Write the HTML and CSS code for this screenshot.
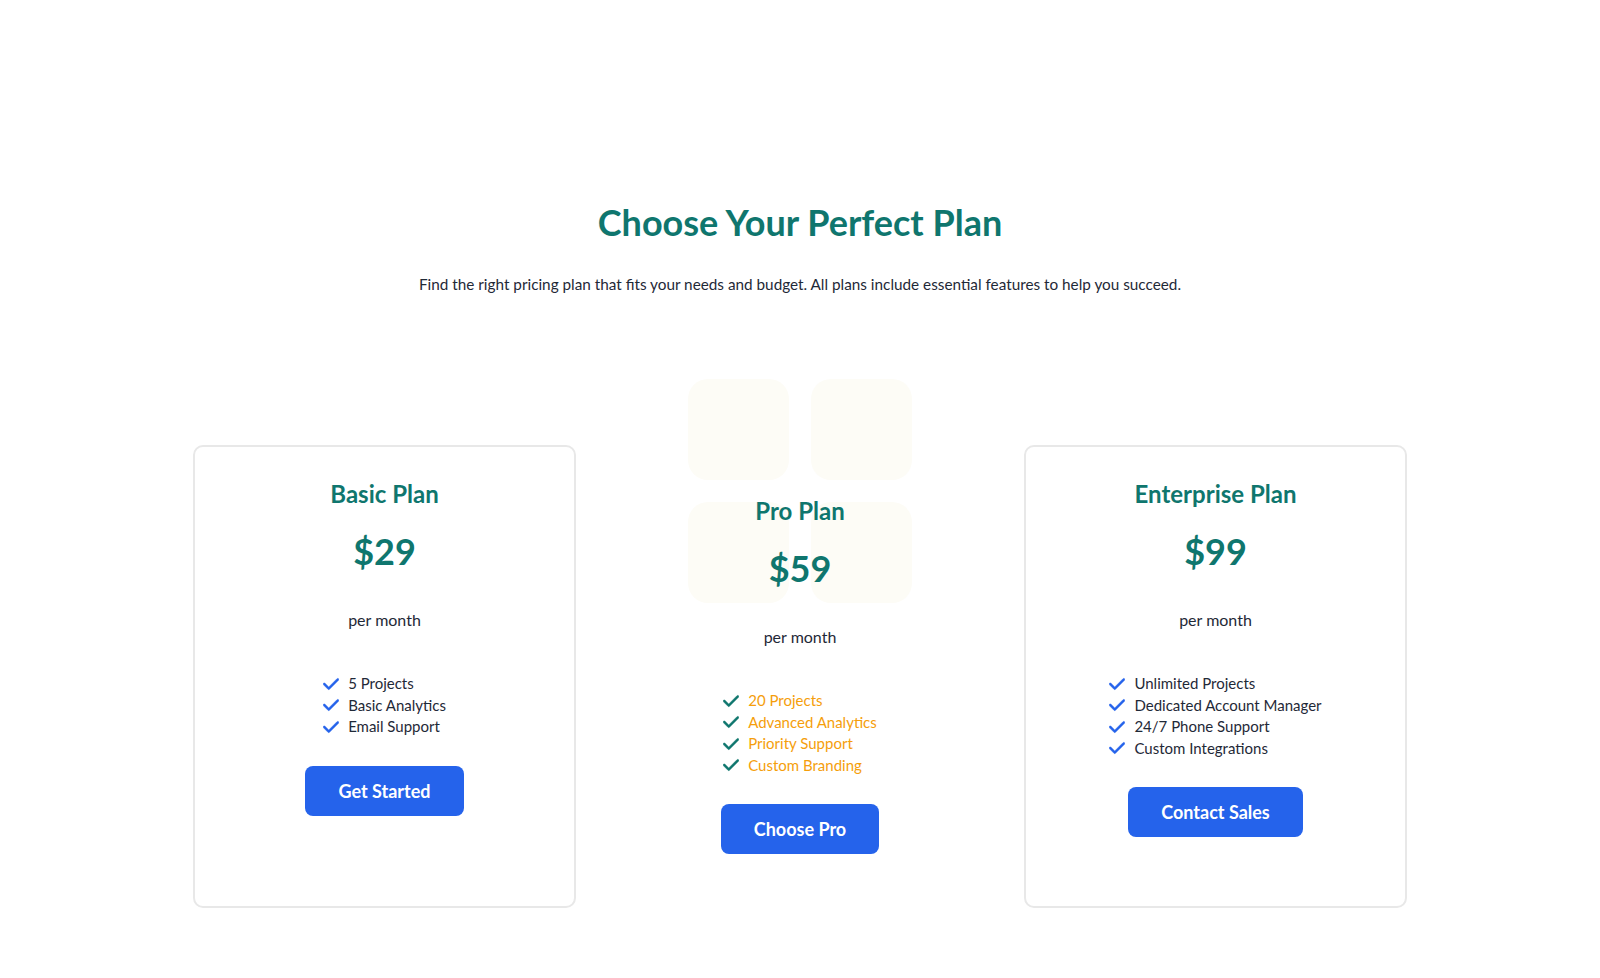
FILE: index.html
```html
<!DOCTYPE html>
<html lang="en">
<head>
<meta charset="utf-8">
<title>Pricing</title>
<link rel="stylesheet" href="styles.css">
</head>
<body>
<main class="pricing">
  <h1 class="pricing-title">Choose Your Perfect Plan</h1>
  <p class="pricing-sub">Find the right pricing plan that fits your needs and budget. All plans include essential features to help you succeed.</p>

  <div class="plans">
    <div class="plan">
      <h2 class="plan-name">Basic Plan</h2>
      <div class="plan-price">$29</div>
      <div class="plan-period">per month</div>
      <ul class="features">
        <li><svg class="check" viewBox="0 0 448 512"><path d="M438.6 105.4c12.5 12.5 12.5 32.8 0 45.3l-256 256c-12.5 12.5-32.8 12.5-45.3 0l-128-128c-12.5-12.5-12.5-32.8 0-45.3s32.8-12.5 45.3 0L160 338.7 393.4 105.4c12.5-12.5 32.8-12.5 45.3 0z"/></svg>5 Projects</li>
        <li><svg class="check" viewBox="0 0 448 512"><path d="M438.6 105.4c12.5 12.5 12.5 32.8 0 45.3l-256 256c-12.5 12.5-32.8 12.5-45.3 0l-128-128c-12.5-12.5-12.5-32.8 0-45.3s32.8-12.5 45.3 0L160 338.7 393.4 105.4c12.5-12.5 32.8-12.5 45.3 0z"/></svg>Basic Analytics</li>
        <li><svg class="check" viewBox="0 0 448 512"><path d="M438.6 105.4c12.5 12.5 12.5 32.8 0 45.3l-256 256c-12.5 12.5-32.8 12.5-45.3 0l-128-128c-12.5-12.5-12.5-32.8 0-45.3s32.8-12.5 45.3 0L160 338.7 393.4 105.4c12.5-12.5 32.8-12.5 45.3 0z"/></svg>Email Support</li>
      </ul>
      <div><a class="btn" href="#">Get Started</a></div>
    </div>

    <div class="plan plan-pro">
      <div class="pro-deco" aria-hidden="true"><span></span><span></span><span></span><span></span></div>
      <h2 class="plan-name">Pro Plan</h2>
      <div class="plan-price">$59</div>
      <div class="plan-period">per month</div>
      <ul class="features">
        <li><svg class="check" viewBox="0 0 448 512"><path d="M438.6 105.4c12.5 12.5 12.5 32.8 0 45.3l-256 256c-12.5 12.5-32.8 12.5-45.3 0l-128-128c-12.5-12.5-12.5-32.8 0-45.3s32.8-12.5 45.3 0L160 338.7 393.4 105.4c12.5-12.5 32.8-12.5 45.3 0z"/></svg>20 Projects</li>
        <li><svg class="check" viewBox="0 0 448 512"><path d="M438.6 105.4c12.5 12.5 12.5 32.8 0 45.3l-256 256c-12.5 12.5-32.8 12.5-45.3 0l-128-128c-12.5-12.5-12.5-32.8 0-45.3s32.8-12.5 45.3 0L160 338.7 393.4 105.4c12.5-12.5 32.8-12.5 45.3 0z"/></svg>Advanced Analytics</li>
        <li><svg class="check" viewBox="0 0 448 512"><path d="M438.6 105.4c12.5 12.5 12.5 32.8 0 45.3l-256 256c-12.5 12.5-32.8 12.5-45.3 0l-128-128c-12.5-12.5-12.5-32.8 0-45.3s32.8-12.5 45.3 0L160 338.7 393.4 105.4c12.5-12.5 32.8-12.5 45.3 0z"/></svg>Priority Support</li>
        <li><svg class="check" viewBox="0 0 448 512"><path d="M438.6 105.4c12.5 12.5 12.5 32.8 0 45.3l-256 256c-12.5 12.5-32.8 12.5-45.3 0l-128-128c-12.5-12.5-12.5-32.8 0-45.3s32.8-12.5 45.3 0L160 338.7 393.4 105.4c12.5-12.5 32.8-12.5 45.3 0z"/></svg>Custom Branding</li>
      </ul>
      <div><a class="btn" href="#">Choose Pro</a></div>
    </div>

    <div class="plan">
      <h2 class="plan-name">Enterprise Plan</h2>
      <div class="plan-price">$99</div>
      <div class="plan-period">per month</div>
      <ul class="features">
        <li><svg class="check" viewBox="0 0 448 512"><path d="M438.6 105.4c12.5 12.5 12.5 32.8 0 45.3l-256 256c-12.5 12.5-32.8 12.5-45.3 0l-128-128c-12.5-12.5-12.5-32.8 0-45.3s32.8-12.5 45.3 0L160 338.7 393.4 105.4c12.5-12.5 32.8-12.5 45.3 0z"/></svg>Unlimited Projects</li>
        <li><svg class="check" viewBox="0 0 448 512"><path d="M438.6 105.4c12.5 12.5 12.5 32.8 0 45.3l-256 256c-12.5 12.5-32.8 12.5-45.3 0l-128-128c-12.5-12.5-12.5-32.8 0-45.3s32.8-12.5 45.3 0L160 338.7 393.4 105.4c12.5-12.5 32.8-12.5 45.3 0z"/></svg>Dedicated Account Manager</li>
        <li><svg class="check" viewBox="0 0 448 512"><path d="M438.6 105.4c12.5 12.5 12.5 32.8 0 45.3l-256 256c-12.5 12.5-32.8 12.5-45.3 0l-128-128c-12.5-12.5-12.5-32.8 0-45.3s32.8-12.5 45.3 0L160 338.7 393.4 105.4c12.5-12.5 32.8-12.5 45.3 0z"/></svg>24/7 Phone Support</li>
        <li><svg class="check" viewBox="0 0 448 512"><path d="M438.6 105.4c12.5 12.5 12.5 32.8 0 45.3l-256 256c-12.5 12.5-32.8 12.5-45.3 0l-128-128c-12.5-12.5-12.5-32.8 0-45.3s32.8-12.5 45.3 0L160 338.7 393.4 105.4c12.5-12.5 32.8-12.5 45.3 0z"/></svg>Custom Integrations</li>
      </ul>
      <div><a class="btn" href="#">Contact Sales</a></div>
    </div>
  </div>
</main>
</body>
</html>
```

FILE: styles.css
```css
* { box-sizing: border-box; }

html, body {
  margin: 0;
  padding: 0;
  background: #ffffff;
}

body {
  font-family: Lato, "Noto Sans", sans-serif;
  color: #1f2937;
}

.pricing {
  padding-top: 201px;
  display: flex;
  flex-direction: column;
  align-items: center;
}

.pricing-title {
  margin: 0;
  font-size: 36px;
  line-height: 43px;
  font-weight: 700;
  color: #0f766e;
}

.pricing-sub {
  margin: 28px 0 0;
  font-size: 15.3px;
  line-height: 24px;
  color: #1f2937;
}

.plans {
  margin-top: 149px;
  width: 1214px;
  display: grid;
  grid-template-columns: repeat(3, 383px);
  gap: 32.5px;
}

.plan {
  position: relative;
  border: 2px solid #e8e8e8;
  border-radius: 10px;
  padding: 31px 24px 40px;
  text-align: center;
  min-height: 463px;
}

.plan-pro {
  border-color: transparent;
  padding-top: 48px;
}

.pro-deco {
  position: absolute;
  top: -68px;
  left: 50%;
  margin-left: -112px;
  width: 224px;
  display: grid;
  grid-template-columns: 101px 101px;
  grid-auto-rows: 101px;
  gap: 22px;
  z-index: 0;
}

.pro-deco span {
  background: #fdfcf6;
  border-radius: 20px;
}

.plan > *:not(.pro-deco) {
  position: relative;
  z-index: 1;
}

.plan-name {
  margin: 0;
  font-size: 24px;
  line-height: 32px;
  font-weight: 700;
  color: #0f766e;
}

.plan-price {
  margin-top: 19px;
  font-size: 36px;
  line-height: 44px;
  font-weight: 700;
  color: #0f766e;
}

.plan-period {
  margin-top: 35px;
  font-size: 16px;
  line-height: 24px;
  color: #1f2937;
}

.features {
  list-style: none;
  margin: 41px 0 0;
  padding: 0;
  display: inline-flex;
  flex-direction: column;
  align-items: flex-start;
  text-align: left;
}

.features li {
  display: flex;
  align-items: center;
  gap: 9px;
  font-size: 15px;
  line-height: 21.5px;
  color: #1f2937;
}

.check {
  width: 16px;
  height: 18px;
  fill: #2563eb;
  stroke: #2563eb;
  stroke-width: 12;
  flex: none;
}

.plan-pro .features li { color: #f59e0b; }
.plan-pro .check { fill: #0f766e; stroke: #0f766e; }

.btn {
  display: inline-block;
  margin-top: 28px;
  padding: 0 33px;
  height: 50px;
  line-height: 50px;
  border-radius: 8px;
  background: #2563eb;
  color: #ffffff;
  font-size: 18px;
  font-weight: 700;
  text-decoration: none;
}
```
